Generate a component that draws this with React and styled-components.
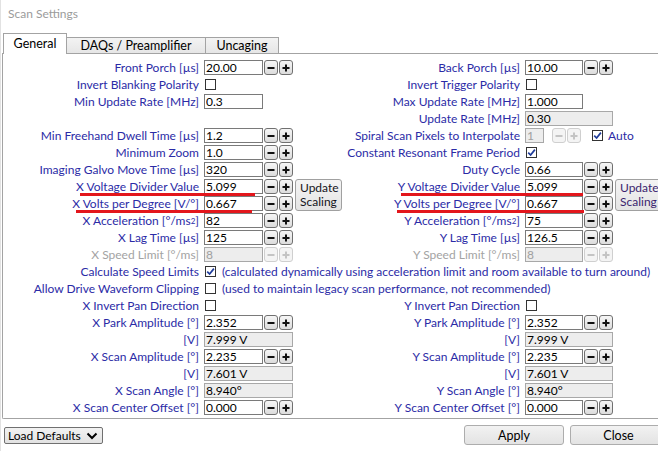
import styled, { createGlobalStyle } from "styled-components";

const Global = createGlobalStyle`
  html, body {
    margin: 0;
    padding: 0;
    background: #ffffff;
    overflow: hidden;
  }
  body {
    font-family: Lato, "Noto Sans", sans-serif;
    font-size: 12px;
  }
`

const Window = styled.div`
  width: 667px;
  height: 451px;
  display: flex;
  flex-direction: column;
  background: #ffffff;
  border-left: 1px solid #e2e2e2;
  box-sizing: border-box;
`
const TitleBar = styled.div`
  height: 30px;
  line-height: 28px;
  padding-left: 7px;
  color: #9b9b9b;
  font-size: 12px;
`
const Body = styled.div`
  padding-left: 1px;
  display: flex;
  flex-direction: column;
`
const TabStrip = styled.div`
  display: flex;
  align-items: flex-end;
  height: 20px;
  margin-left: 1px;
  margin-top: 4px;
  position: relative;
  z-index: 1;
  margin-bottom: -1px;
`
const Tab = styled.div`
  box-sizing: border-box;
  width: ${p => p.$w}px;
  height: ${p => (p.$active ? 21 : 17)}px;
  border: 1px solid #a3a3a3;
  border-bottom: ${p => (p.$active ? "none" : "1px solid #a3a3a3")};
  border-left: ${p => (p.$first || p.$active ? "1px solid #a3a3a3" : "none")};
  background: ${p => (p.$active ? "#ffffff" : "linear-gradient(#f3f3f3, #e6e6e6)")};
  display: flex;
  align-items: center;
  justify-content: center;
  color: #000;
  font-size: 12.5px;
  padding-bottom: ${p => (p.$active ? 2 : 0)}px;
`
const Panel = styled.div`
  border-top: 1px solid #a3a3a3;
  border-left: 1px solid #a3a3a3;
  border-bottom: 1px solid #a3a3a3;
  border-bottom-left-radius: 2px;
  padding: 6px 0 3px 0;
`
const Grid = styled.div`
  display: grid;
  grid-template-columns: 200px 59px 14px 14px 50px 179px 58px 14px 14px 1fr;
  grid-template-rows: repeat(21, 15px);
  column-gap: 1px;
  row-gap: 2px;
`
const Label = styled.div`
  grid-row: ${p => p.$r};
  grid-column: ${p => p.$c};
  display: flex;
  justify-content: flex-end;
  align-items: center;
  padding-right: 4px;
  white-space: nowrap;
  color: ${p => (p.$muted ? "#a3a3a3" : "#2b2ba6")};
  line-height: 15px;
`
const Input = styled.input`
  grid-row: ${p => p.$r};
  grid-column: ${p => p.$c};
  box-sizing: border-box;
  width: 100%;
  height: 15px;
  margin: 0;
  padding: 0 1px;
  border: 1px solid ${p => (p.$grey ? "#a8a8a8" : "#7a7a7a")};
  background: ${p => (p.$grey ? "#ededed" : "#ffffff")};
  color: ${p => (p.$off ? "#a0a0a0" : "#000")};
  font-family: inherit;
  font-size: 12px;
  line-height: 13px;
  outline: none;
`
const SpinBtn = styled.div`
  grid-row: ${p => p.$r};
  grid-column: ${p => p.$c};
  box-sizing: border-box;
  width: 14px;
  height: 15px;
  border: 1px solid ${p => (p.$off ? "#cfcfcf" : "#707070")};
  border-radius: 3px;
  background: ${p => (p.$off ? "#f4f4f4" : "linear-gradient(#f6f6f6, #dcdcdc)")};
  display: flex;
  align-items: center;
  justify-content: center;
`
const Glyph = styled.svg`
  width: 8px;
  height: 8px;
`
const Box = styled.div`
  grid-row: ${p => p.$r};
  grid-column: ${p => p.$c};
  display: flex;
  align-items: center;
  gap: 6px;
  white-space: nowrap;
  color: #2b2ba6;
`
const Check = styled.span`
  box-sizing: border-box;
  width: 11px;
  height: 11px;
  margin-left: 1px;
  border: 1px solid #333333;
  background: #ffffff;
  display: inline-flex;
  align-items: center;
  justify-content: center;
  flex: none;
`
const UpdateBtn = styled.div`
  grid-row: ${p => p.$r} / span 2;
  grid-column: ${p => p.$c};
  margin-left: 1px;
  width: 47px;
  height: 32px;
  box-sizing: border-box;
  border: 1px solid #a0a0a0;
  border-radius: 3px;
  background: linear-gradient(#f4f4f4, #e4e4e4);
  color: ${p => p.$tone};
  font-size: 12px;
  line-height: 14px;
  display: flex;
  flex-direction: column;
  justify-content: center;
  padding-left: 4px;
`
const Mark = styled.div`
  grid-row: ${p => p.$r};
  grid-column: ${p => p.$c};
  justify-self: end;
  align-self: end;
  width: ${p => p.$w}px;
  margin-right: ${p => p.$mr}px;
  margin-bottom: -2px;
  height: 3px;
  background: #e3161c;
  z-index: 2;
`
const Footer = styled.div`
  display: flex;
  align-items: center;
  padding: 7px 0 0 2px;
`
const Combo = styled.div`
  box-sizing: border-box;
  width: 99px;
  height: 17px;
  border: 1px solid #707070;
  border-radius: 2px;
  background: linear-gradient(#f2f2f2, #e2e2e2);
  display: flex;
  align-items: center;
  justify-content: space-between;
  padding: 0 4px 0 3px;
  color: #000;
`
const Actions = styled.div`
  margin-left: auto;
  display: flex;
  gap: 6px;
  margin-top: -1px;
`
const Button = styled.div`
  box-sizing: border-box;
  width: ${p => p.$w}px;
  height: 20px;
  border: 1px solid #adadad;
  border-radius: 3px;
  background: linear-gradient(#f2f2f2, #e3e3e3);
  display: flex;
  align-items: center;
  justify-content: center;
  color: #000;
  font-size: 12.5px;
`

const Minus = ({ off }) => (
  <Glyph viewBox="0 0 8 8">
    <rect x="0.5" y="3" width="7" height="2" fill={off ? "#c4c4c4" : "#111"} />
  </Glyph>
)
const Plus = ({ off }) => (
  <Glyph viewBox="0 0 8 8">
    <rect x="0.5" y="3" width="7" height="2" fill={off ? "#c4c4c4" : "#111"} />
    <rect x="3" y="0.5" width="2" height="7" fill={off ? "#c4c4c4" : "#111"} />
  </Glyph>
)

const Tick = () => (
  <svg width="9" height="9" viewBox="0 0 9 9">
    <path d="M1.2 4.6 L3.6 7 L7.9 1.6" fill="none" stroke="#1f3c9a" strokeWidth="1.7" />
  </svg>
)

// side 0 = left column group, side 1 = right column group
const col = (side, n) => side * 5 + n

const Spin = ({ r, side, label, value, off }) => (
  <>
    <Label $r={r} $c={col(side, 1)} $muted={off}>{label}</Label>
    <Input $r={r} $c={col(side, 2)} $grey={off} $off={off} value={value} readOnly />
    <SpinBtn $r={r} $c={col(side, 3)} $off={off}><Minus off={off} /></SpinBtn>
    <SpinBtn $r={r} $c={col(side, 4)} $off={off}><Plus off={off} /></SpinBtn>
  </>
)

const Plain = ({ r, side, label, value }) => (
  <>
    <Label $r={r} $c={col(side, 1)}>{label}</Label>
    <Input $r={r} $c={col(side, 2)} value={value} readOnly />
  </>
)

const Shown = ({ r, side, label, value }) => (
  <>
    <Label $r={r} $c={col(side, 1)}>{label}</Label>
    <Input $r={r} $c={`${col(side, 2)} / span 3`} $grey value={value} readOnly />
  </>
)

const Toggle = ({ r, side, label, on }) => (
  <>
    <Label $r={r} $c={col(side, 1)}>{label}</Label>
    <Box $r={r} $c={col(side, 2)}><Check>{on && <Tick />}</Check></Box>
  </>
)

const SmallInput = styled(Input)`
  width: 19px;
`
const SmallSpin = styled(SpinBtn)`
  margin-left: 2px;
`
const Sq = styled.sup`
  font-size: 8px;
  line-height: 0;
`

const App = () => {
  return (
    <Window>
      <Global />
      <TitleBar>Scan Settings</TitleBar>
      <Body>
        <TabStrip>
          <Tab $w={64} $active $first>General</Tab>
          <Tab $w={139}>DAQs / Preamplifier</Tab>
          <Tab $w={73}>Uncaging</Tab>
        </TabStrip>
        <Panel>
          <Grid>
            <Spin r={1} side={0} label="Front Porch [µs]" value="20.00" />
            <Spin r={1} side={1} label="Back Porch [µs]" value="10.00" />
            <Toggle r={2} side={0} label="Invert Blanking Polarity" />
            <Toggle r={2} side={1} label="Invert Trigger Polarity" />
            <Plain r={3} side={0} label="Min Update Rate [MHz]" value="0.3" />
            <Plain r={3} side={1} label="Max Update Rate [MHz]" value="1.000" />
            <Shown r={4} side={1} label="Update Rate [MHz]" value="0.30" />

            <Spin r={5} side={0} label="Min Freehand Dwell Time [µs]" value="1.2" />
            <Label $r={5} $c={6}>Spiral Scan Pixels to Interpolate</Label>
            <Box $r={5} $c="7 / -1">
              <SmallInput $grey $off value="1" readOnly />
              <span style={{ display: "flex", gap: 1 }}>
                <SmallSpin $off><Minus off /></SmallSpin>
                <SpinBtn $off><Plus off /></SpinBtn>
              </span>
              <Check style={{ marginLeft: 5 }}><Tick /></Check>
              <span style={{ marginLeft: -1 }}>Auto</span>
            </Box>

            <Spin r={6} side={0} label="Minimum Zoom" value="1.0" />
            <Toggle r={6} side={1} label="Constant Resonant Frame Period" on />
            <Spin r={7} side={0} label="Imaging Galvo Move Time [µs]" value="320" />
            <Spin r={7} side={1} label="Duty Cycle" value="0.66" />

            <Spin r={8} side={0} label="X Voltage Divider Value" value="5.099" />
            <Spin r={8} side={1} label="Y Voltage Divider Value" value="5.099" />
            <Spin r={9} side={0} label="X Volts per Degree [V/°]" value="0.667" />
            <Spin r={9} side={1} label="Y Volts per Degree [V/°]" value="0.667" />
            <UpdateBtn $r={8} $c={5} $tone="#141420"><span>Update</span><span>Scaling</span></UpdateBtn>
            <UpdateBtn $r={8} $c={10} $tone="#3b1f6e"><span>Update</span><span>Scaling</span></UpdateBtn>
            <Mark $r={8} $c="1 / 3" $w={175} $mr={8} />
            <Mark $r={9} $c="1 / 3" $w={176} $mr={11} />
            <Mark $r={8} $c="6 / 8" $w={182} $mr={0} />
            <Mark $r={9} $c="6 / 8" $w={187} $mr={-1} />

            <Spin r={10} side={0} label={<>X Acceleration [°/ms<Sq>2</Sq>]</>} value="82" />
            <Spin r={10} side={1} label={<>Y Acceleration [°/ms<Sq>2</Sq>]</>} value="75" />
            <Spin r={11} side={0} label="X Lag Time [µs]" value="125" />
            <Spin r={11} side={1} label="Y Lag Time [µs]" value="126.5" />
            <Spin r={12} side={0} label="X Speed Limit [°/ms]" value="8" off />
            <Spin r={12} side={1} label="Y Speed Limit [°/ms]" value="8" off />

            <Label $r={13} $c={1}>Calculate Speed Limits</Label>
            <Box $r={13} $c="2 / -1">
              <Check><Tick /></Check>
              <span>(calculated dynamically using acceleration limit and room available to turn around)</span>
            </Box>
            <Label $r={14} $c={1}>Allow Drive Waveform Clipping</Label>
            <Box $r={14} $c="2 / -1">
              <Check />
              <span>(used to maintain legacy scan performance, not recommended)</span>
            </Box>

            <Toggle r={15} side={0} label="X Invert Pan Direction" />
            <Toggle r={15} side={1} label="Y Invert Pan Direction" />
            <Spin r={16} side={0} label="X Park Amplitude [°]" value="2.352" />
            <Spin r={16} side={1} label="Y Park Amplitude [°]" value="2.352" />
            <Shown r={17} side={0} label="[V]" value="7.999 V" />
            <Shown r={17} side={1} label="[V]" value="7.999 V" />
            <Spin r={18} side={0} label="X Scan Amplitude [°]" value="2.235" />
            <Spin r={18} side={1} label="Y Scan Amplitude [°]" value="2.235" />
            <Shown r={19} side={0} label="[V]" value="7.601 V" />
            <Shown r={19} side={1} label="[V]" value="7.601 V" />
            <Shown r={20} side={0} label="X Scan Angle [°]" value="8.940°" />
            <Shown r={20} side={1} label="Y Scan Angle [°]" value="8.940°" />
            <Spin r={21} side={0} label="X Scan Center Offset [°]" value="0.000" />
            <Spin r={21} side={1} label="Y Scan Center Offset [°]" value="0.000" />
          </Grid>
        </Panel>
        <Footer>
          <Combo>
            <span>Load Defaults</span>
            <svg width="12" height="8" viewBox="0 0 12 8">
              <polyline points="1.5,1.5 6,6 10.5,1.5" fill="none" stroke="#000" strokeWidth="2" />
            </svg>
          </Combo>
          <Actions>
            <Button $w={100}>Apply</Button>
            <Button $w={97}>Close</Button>
          </Actions>
        </Footer>
      </Body>
    </Window>
  )
}

export default App
